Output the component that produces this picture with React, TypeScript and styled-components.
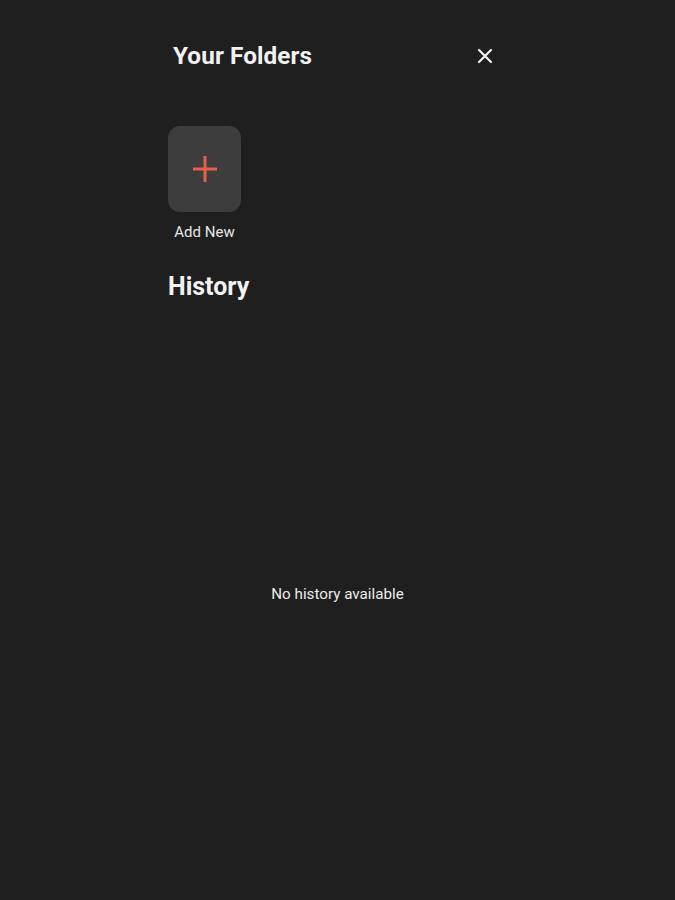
import React from 'react';
import styled, { createGlobalStyle } from 'styled-components';

const GlobalStyle = createGlobalStyle`
  html, body {
    margin: 0;
    padding: 0;
    background: #1f1f1f;
  }
  * {
    box-sizing: border-box;
  }
`;

const Page = styled.div`
  min-height: 900px;
  background: #1f1f1f;
  font-family: Roboto, 'Liberation Sans', Arial, sans-serif;
  color: #f2f2f2;
  display: flex;
  justify-content: center;
`;

const Panel = styled.div`
  width: 339px;
  display: flex;
  flex-direction: column;
`;

const Header = styled.div`
  display: flex;
  align-items: center;
  justify-content: space-between;
  padding: 41px 13px 0 5px;
  height: 70px;
`;

const Title = styled.h1`
  margin: 0;
  font-size: 24.3px;
  font-weight: 700;
  letter-spacing: 0.1px;
`;

const CloseButton = styled.button`
  background: none;
  border: none;
  padding: 0;
  width: 18px;
  height: 18px;
  display: flex;
  align-items: center;
  justify-content: center;
  cursor: pointer;
`;

const Folders = styled.div`
  display: flex;
  gap: 16px;
  margin-top: 56px;
`;

const FolderItem = styled.div`
  display: flex;
  flex-direction: column;
  align-items: center;
  width: 73px;
`;

const AddTile = styled.div`
  width: 73px;
  height: 86px;
  border-radius: 12px;
  background: #3d3d3d;
  display: flex;
  align-items: center;
  justify-content: center;
`;

const FolderLabel = styled.span`
  margin-top: 11px;
  font-size: 15px;
  color: #e6e6e6;
  white-space: nowrap;
`;

const SectionTitle = styled.h2`
  margin: 31px 0 0;
  font-size: 25px;
  font-weight: 700;
`;

const Empty = styled.div`
  margin-top: 284px;
  text-align: center;
  font-size: 15.2px;
  color: #ececec;
`;

export default function App() {
  return (
    <>
      <GlobalStyle />
      <Page>
        <Panel>
          <Header>
            <Title>Your Folders</Title>
            <CloseButton aria-label="Close">
              <svg width="16" height="16" viewBox="0 0 16 16">
                <path d="M2 2 L14 14 M14 2 L2 14" stroke="#f2f2f2" strokeWidth="2.2" strokeLinecap="round" />
              </svg>
            </CloseButton>
          </Header>
          <Folders>
            <FolderItem>
              <AddTile>
                <svg width="26" height="28" viewBox="0 0 26 28">
                  <path d="M13 1 V27 M1 14 H25" stroke="#e8604a" strokeWidth="3" />
                </svg>
              </AddTile>
              <FolderLabel>Add New</FolderLabel>
            </FolderItem>
          </Folders>
          <SectionTitle>History</SectionTitle>
          <Empty>No history available</Empty>
        </Panel>
      </Page>
    </>
  );
}
